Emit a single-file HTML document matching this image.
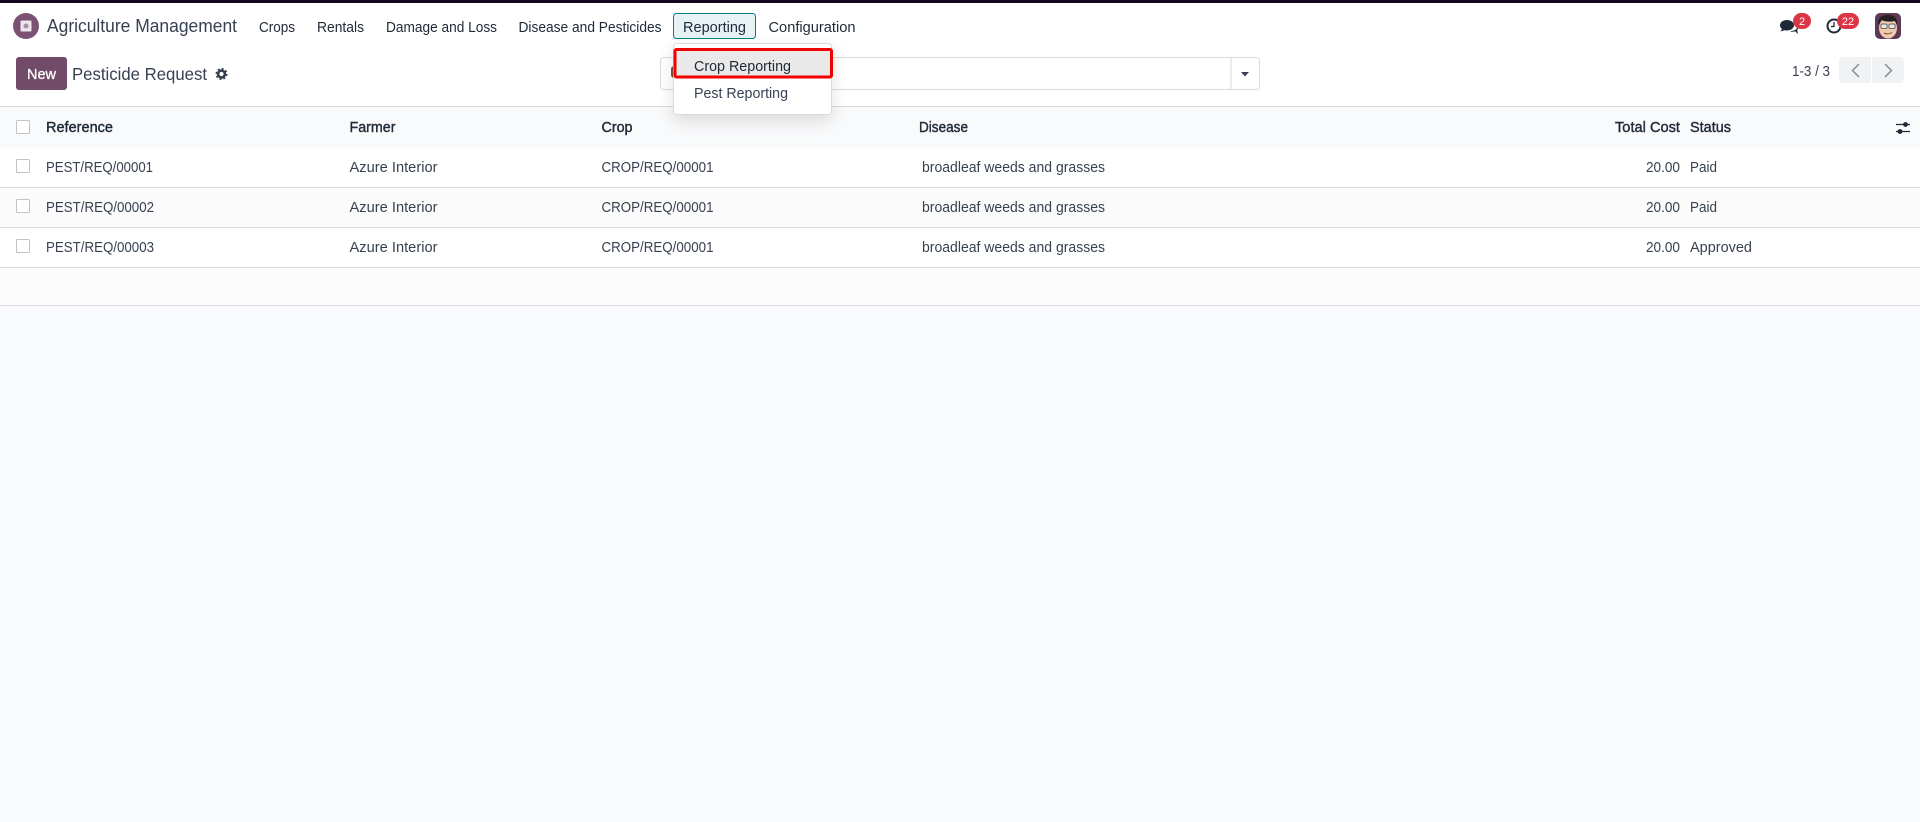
<!DOCTYPE html>
<html lang="en"><head><meta charset="utf-8"><title>Pesticide Request</title>
<style>
html,body{margin:0;padding:0;background:#f9fafb;width:1920px;height:822px;overflow:hidden}
svg{display:block;position:absolute;left:0;top:0}
text{font-family:"Liberation Sans",sans-serif;font-size:14.6px;fill:#374151}
.h{fill:#1f2937;font-size:14.6px;stroke:#1f2937;stroke-width:.4px}
.n{font-size:15px;fill:#1f2937}
</style></head><body>
<svg width="1920" height="822" viewBox="0 0 1920 822" xmlns="http://www.w3.org/2000/svg">
<defs><filter id="sh" x="-20%" y="-30%" width="140%" height="170%"><feDropShadow dx="0" dy="6" stdDeviation="8" flood-color="#000" flood-opacity=".12"/></filter></defs>
<rect width="1920" height="822" fill="#f9fafb"/>
<rect width="1920" height="106" fill="#fff"/>
<rect width="1920" height="3" fill="#14061c"/>
<!-- nav -->
<circle cx="26" cy="26" r="13" fill="#7c5274"/>
<rect x="20.500" y="20.500" width="11" height="11" rx="1" fill="#ece7eb"/>
<circle cx="26" cy="26" r="2.500" fill="#a590a1"/>
<text x="47" y="32" style="font-size:18px" textLength="190" lengthAdjust="spacingAndGlyphs">Agriculture Management</text>
<text class="n" x="259" y="32" textLength="36" lengthAdjust="spacingAndGlyphs">Crops</text>
<text class="n" x="317" y="32" textLength="47" lengthAdjust="spacingAndGlyphs">Rentals</text>
<text class="n" x="386" y="32" textLength="111" lengthAdjust="spacingAndGlyphs">Damage and Loss</text>
<text class="n" x="518.5" y="32" textLength="143" lengthAdjust="spacingAndGlyphs">Disease and Pesticides</text>
<rect x="673.5" y="13.5" width="82" height="25" rx="3" fill="#e6f2f3" stroke="#017e84"/>
<text class="n" x="683" y="32" textLength="63" lengthAdjust="spacingAndGlyphs">Reporting</text>
<text class="n" x="768.5" y="32" textLength="87" lengthAdjust="spacingAndGlyphs">Configuration</text>
<!-- systray -->
<path d="M1787 20c-4 0-7 2.300-7 5.300 0 1.500.8 2.800 2 3.700l-1.500 2.500 4-1.300c.8.200 1.600.3 2.500.3 4 0 7-2.300 7-5.200s-3-5.300-7-5.300z" fill="#1f2937"/>
<path d="M1790 31.500c2 .5 3.500.3 5-.3l3 2.800-.8-4c1-1 1-2 1-3l-3 3z" fill="#1f2937"/>
<rect x="1793" y="13" width="18" height="16" rx="8" fill="#dc3545"/>
<text x="1802" y="25" text-anchor="middle" style="font-size:11px;fill:#fff">2</text>
<circle cx="1834" cy="26" r="6.500" fill="none" stroke="#1f2937" stroke-width="2"/>
<path d="M1834 22v4.500h-3" fill="none" stroke="#1f2937" stroke-width="1.300"/>
<rect x="1837" y="13" width="22" height="16" rx="8" fill="#dc3545"/>
<text x="1848" y="25" text-anchor="middle" style="font-size:11px;fill:#fff">22</text>
<rect x="1875" y="13" width="26" height="26" rx="5" fill="#5f3a58"/>
<ellipse cx="1888" cy="28" rx="9" ry="10.500" fill="#f1c9ad"/>
<path d="M1878.500 25c-1.500-7 3-10 9.500-10 6 0 10 3 9 10l-2-4c-4 1-10 1-13.500-1z" fill="#232023"/>
<rect x="1881" y="24" width="6" height="4.500" rx="1" fill="#e8e8e8" stroke="#444" stroke-width=".8"/>
<rect x="1889" y="24" width="6" height="4.500" rx="1" fill="#e8e8e8" stroke="#444" stroke-width=".8"/>
<path d="M1884 33q4 2 8-.5" stroke="#8a4a3a" fill="none"/>
<!-- control panel -->
<rect x="16" y="57" width="51" height="33" rx="3" fill="#714b67"/>
<text x="27" y="79" style="font-size:14.600px;fill:#fff;stroke:#fff;stroke-width:.3px" textLength="29" lengthAdjust="spacingAndGlyphs">New</text>
<text x="72" y="80" style="font-size:17.500px" textLength="135" lengthAdjust="spacingAndGlyphs">Pesticide Request</text>
<circle cx="221.500" cy="74" r="3.400" fill="none" stroke="#374151" stroke-width="2.600"/>
<circle cx="221.500" cy="74" r="5.100" fill="none" stroke="#374151" stroke-width="1.800" stroke-dasharray="2 2"/>
<rect x="660.500" y="57.500" width="599" height="32" rx="3" fill="#fff" stroke="#d8dadd"/>
<path d="M1231 58v31" stroke="#d8dadd"/>
<path d="M1241 72h8l-4 4.500z" fill="#374151"/>
<rect x="671" y="66" width="6" height="12" rx="3" fill="#8a4a3a"/>
<text x="1792" y="76" textLength="38" lengthAdjust="spacingAndGlyphs">1-3 / 3</text>
<path d="M1843 57h28v26h-28a4 4 0 0 1-4-4v-18a4 4 0 0 1 4-4z" fill="#f1f2f4"/>
<path d="M1872 57h28a4 4 0 0 1 4 4v18a4 4 0 0 1-4 4h-28z" fill="#f1f2f4"/>
<path d="M1859 64l-6.500 6.500 6.500 6.500" fill="none" stroke="#888c92" stroke-width="1.500"/>
<path d="M1885 64l6.500 6.500-6.500 6.500" fill="none" stroke="#888c92" stroke-width="1.500"/>
<!-- list -->
<rect y="106" width="1920" height="1" fill="#d8dadd"/>
<rect y="107" width="1920" height="41" fill="#f9fafb"/>
<rect y="148" width="1920" height="39" fill="#fff"/>
<rect y="187" width="1920" height="1" fill="#d8dadd"/>
<rect y="188" width="1920" height="39" fill="#fbfbfb"/>
<rect y="227" width="1920" height="1" fill="#d8dadd"/>
<rect y="228" width="1920" height="39" fill="#fff"/>
<rect y="267" width="1920" height="1" fill="#d8dadd"/>
<rect y="268" width="1920" height="37" fill="#fcfcfc"/>
<rect y="305" width="1920" height="1" fill="#d8dadd"/>
<g fill="#fff" stroke="#c0c3c7"><rect x="16.500" y="120.500" width="13" height="13" rx="1"/><rect x="16.500" y="159.500" width="13" height="13" rx="1"/><rect x="16.500" y="199.500" width="13" height="13" rx="1"/><rect x="16.500" y="239.500" width="13" height="13" rx="1"/></g>
<text class="h" x="46" y="132" textLength="67" lengthAdjust="spacingAndGlyphs">Reference</text>
<text class="h" x="349.500" y="132" textLength="46" lengthAdjust="spacingAndGlyphs">Farmer</text>
<text class="h" x="601.500" y="132" textLength="31" lengthAdjust="spacingAndGlyphs">Crop</text>
<text class="h" x="919" y="132" textLength="49" lengthAdjust="spacingAndGlyphs">Disease</text>
<text class="h" x="1615" y="132" textLength="65" lengthAdjust="spacingAndGlyphs">Total Cost</text>
<text class="h" x="1690" y="132" textLength="41" lengthAdjust="spacingAndGlyphs">Status</text>
<path d="M1896 124.500h14M1896 131.500h14" stroke="#1f2937" stroke-width="1.200"/><circle cx="1905.500" cy="124.500" r="2.400" fill="#1f2937"/><circle cx="1900" cy="131.500" r="2.400" fill="#1f2937"/>
<text x="46" y="172" textLength="107" lengthAdjust="spacingAndGlyphs">PEST/REQ/00001</text>
<text x="349.500" y="172" textLength="88" lengthAdjust="spacingAndGlyphs">Azure Interior</text>
<text x="601.500" y="172" textLength="112" lengthAdjust="spacingAndGlyphs">CROP/REQ/00001</text>
<text x="922" y="172" textLength="183" lengthAdjust="spacingAndGlyphs">broadleaf weeds and grasses</text>
<text x="1646" y="172" textLength="34" lengthAdjust="spacingAndGlyphs">20.00</text>
<text x="1690" y="172" textLength="27" lengthAdjust="spacingAndGlyphs">Paid</text>
<text x="46" y="212" textLength="108" lengthAdjust="spacingAndGlyphs">PEST/REQ/00002</text>
<text x="349.500" y="212" textLength="88" lengthAdjust="spacingAndGlyphs">Azure Interior</text>
<text x="601.500" y="212" textLength="112" lengthAdjust="spacingAndGlyphs">CROP/REQ/00001</text>
<text x="922" y="212" textLength="183" lengthAdjust="spacingAndGlyphs">broadleaf weeds and grasses</text>
<text x="1646" y="212" textLength="34" lengthAdjust="spacingAndGlyphs">20.00</text>
<text x="1690" y="212" textLength="27" lengthAdjust="spacingAndGlyphs">Paid</text>
<text x="46" y="252" textLength="108" lengthAdjust="spacingAndGlyphs">PEST/REQ/00003</text>
<text x="349.500" y="252" textLength="88" lengthAdjust="spacingAndGlyphs">Azure Interior</text>
<text x="601.500" y="252" textLength="112" lengthAdjust="spacingAndGlyphs">CROP/REQ/00001</text>
<text x="922" y="252" textLength="183" lengthAdjust="spacingAndGlyphs">broadleaf weeds and grasses</text>
<text x="1646" y="252" textLength="34" lengthAdjust="spacingAndGlyphs">20.00</text>
<text x="1690" y="252" textLength="62" lengthAdjust="spacingAndGlyphs">Approved</text>
<!-- dropdown -->
<rect x="673.500" y="43.500" width="158" height="71" rx="3" fill="#fff" stroke="#d8dadd" filter="url(#sh)"/>
<rect x="675" y="49.500" width="156.500" height="27.500" rx="1.500" fill="#e9e9e9" stroke="#f30000" stroke-width="3"/>
<text x="694" y="71" style="fill:#1f2937;font-size:15px" textLength="97" lengthAdjust="spacingAndGlyphs">Crop Reporting</text>
<text x="694" y="98" style="font-size:15px" textLength="94" lengthAdjust="spacingAndGlyphs">Pest Reporting</text>
</svg>
</body></html>
